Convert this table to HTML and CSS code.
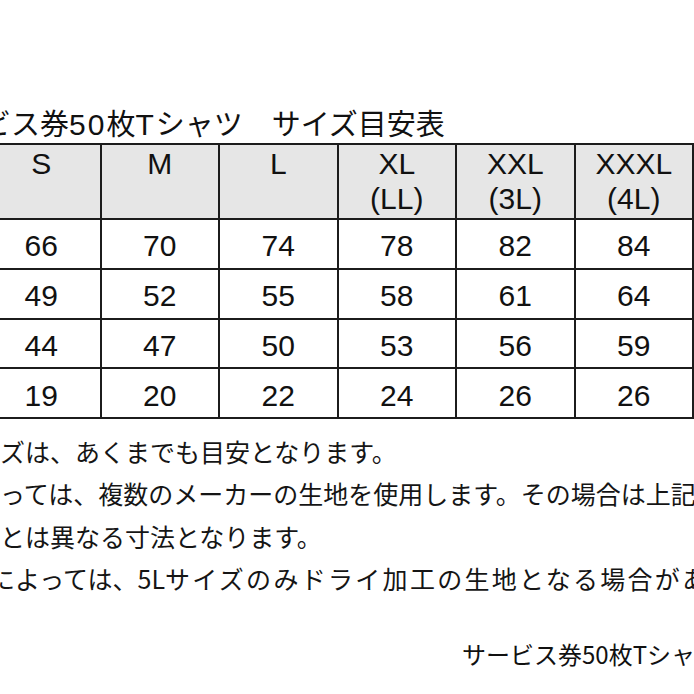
FILE: index.html
```html
<!DOCTYPE html>
<html lang="ja">
<head>
<meta charset="utf-8">
<link rel="stylesheet" href="styles.css">
</head>
<body>
<div class="page">
  <div class="title">サービス券<span class="num">50</span>枚<span class="num">T</span>シャツ　サイズ目安表</div>
  <table class="chart">
    <colgroup>
      <col class="c"><col class="c"><col class="c"><col class="c"><col class="c"><col class="c"><col class="c">
    </colgroup>
    <thead>
      <tr>
        <th>S</th><th>M</th><th>L</th><th>XL<br>(LL)</th><th>XXL<br>(3L)</th><th>XXXL<br>(4L)</th><th></th>
      </tr>
    </thead>
    <tbody>
      <tr><td>66</td><td>70</td><td>74</td><td>78</td><td>82</td><td>84</td><td></td></tr>
      <tr><td>49</td><td>52</td><td>55</td><td>58</td><td>61</td><td>64</td><td></td></tr>
      <tr><td>44</td><td>47</td><td>50</td><td>53</td><td>56</td><td>59</td><td></td></tr>
      <tr><td>19</td><td>20</td><td>22</td><td>24</td><td>26</td><td>26</td><td></td></tr>
    </tbody>
  </table>
  <div class="notes">
    <div class="line">ズは、あくまでも目安となります。</div>
    <div class="line">っては、複数のメーカーの生地を使用します。その場合は上記</div>
    <div class="line">とは異なる寸法となります。</div>
    <div class="line shift">によっては、5L<span class="wide">サイズのみドライ加工の生地となる場合があります。</span></div>
  </div>
  <div class="footer">サービス券50枚Tシャツ　サイズ目安表</div>
</div>
</body>
</html>
```
FILE: styles.css
```css
html, body {
  margin: 0;
  padding: 0;
  background: #ffffff;
  overflow: hidden;
}

.page {
  width: 694px;
  height: 694px;
  overflow: hidden;
  color: #111111;
  font-family: "Noto Sans CJK JP", "Liberation Sans", sans-serif;
}

.title {
  margin: 104px 0 0 -76px;
  font-size: 29px;
  line-height: 36px;
  height: 36px;
  white-space: nowrap;
}

.title .num {
  font-family: "Liberation Sans", sans-serif;
  font-size: 30px;
  letter-spacing: 2px;
}

.chart {
  margin: 3px 0 0 -19px;
  border-collapse: collapse;
  table-layout: fixed;
  width: 829.5px;
  font-family: "Liberation Sans", "Noto Sans CJK JP", sans-serif;
  font-size: 30px;
  color: #111111;
}

.chart .c {
  width: 118.5px;
}

.chart th,
.chart td {
  border: 2px solid #1c1c1c;
  padding: 0;
  text-align: center;
  font-weight: normal;
}

.chart th {
  background: #e6e6e6;
  height: 75px;
  vertical-align: top;
  line-height: 35px;
  padding-top: 1px;
  box-sizing: border-box;
}

.chart td {
  height: 49.8px;
  line-height: 34px;
  vertical-align: middle;
  padding-top: 5px;
  box-sizing: border-box;
}

.notes {
  margin-top: 11px;
  font-size: 25px;
  line-height: 42.3px;
  color: #151515;
}

.notes .line {
  white-space: nowrap;
}

.notes .shift {
  margin-left: -10px;
}

.notes .wide {
  letter-spacing: 2.3px;
}

.footer {
  margin: 37px 0 0 462px;
  font-size: 24px;
  line-height: 36px;
  white-space: nowrap;
}
```
